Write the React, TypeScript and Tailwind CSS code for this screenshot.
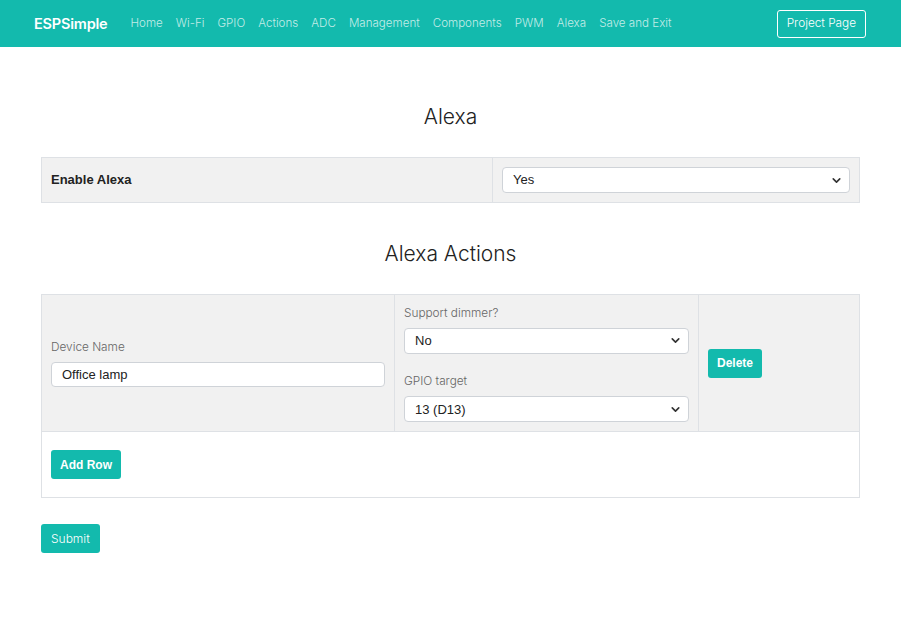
import { ChevronDown } from 'lucide-react';

const links = ['Home', 'Wi-Fi', 'GPIO', 'Actions', 'ADC', 'Management', 'Components', 'PWM', 'Alexa', 'Save and Exit'];

function Select({ value }: { value: string }) {
  return (
    <div className="flex h-[26px] items-center justify-between rounded-[4px] border border-[#cfd3d8] bg-white pl-[10px] pr-[6px] font-['Liberation_Sans',sans-serif] text-[13px] text-[#222]">
      <span>{value}</span>
      <ChevronDown className="h-[13px] w-[13px] text-[#333]" strokeWidth={3} />
    </div>
  );
}

export default function App() {
  return (
    <div className="min-h-[634px] bg-white font-['Inter',sans-serif]">
      <nav className="flex h-[47px] items-center bg-[#13baad] pl-[34px] pr-[35px] pt-[1px]">
        <span className="mr-[23px] text-[14.5px] font-semibold tracking-[-0.2px] text-white">ESPSimple</span>
        <div className="flex gap-[13px] text-[11.6px] font-light text-[#c3ece8]">
          {links.map((l) => (
            <span key={l}>{l}</span>
          ))}
        </div>
        <span className="ml-auto flex h-[28px] items-center rounded-[3px] border border-white px-[9px] text-[11.8px] font-light text-white">
          Project Page
        </span>
      </nav>

      <main className="mx-[41px] pt-[56px]">
        <h2 className="text-center text-[21px] font-light leading-[28px] text-[#222]">Alexa</h2>

        <div className="mt-[26px] flex h-[46px] border border-[#dee1e5] bg-[#f1f1f1]">
          <div className="flex w-[451px] items-center border-r border-[#dee1e5] px-[9px] font-['Liberation_Sans',sans-serif] text-[13px] font-bold text-[#222]">
            Enable Alexa
          </div>
          <div className="flex-1 px-[9px] pt-[9px]">
            <Select value="Yes" />
          </div>
        </div>

        <h2 className="mt-[37px] text-center text-[21px] font-light leading-[28px] text-[#222]">Alexa Actions</h2>

        <div className="mt-[26px] border border-[#dee1e5]">
          <div className="flex h-[137px] border-b border-[#dee1e5] bg-[#f1f1f1]">
            <div className="flex w-[353px] flex-col justify-center border-r border-[#dee1e5] px-[9px]">
              <label className="mb-[5px] text-[11.8px] font-light text-[#666]">Device Name</label>
              <div className="flex h-[25px] items-center rounded-[4px] border border-[#cfd3d8] bg-white px-[10px] font-['Liberation_Sans',sans-serif] text-[13px] text-[#222]">
                Office lamp
              </div>
            </div>
            <div className="flex w-[304px] flex-col border-r border-[#dee1e5] px-[9px] pt-[10px]">
              <label className="mb-[5px] text-[11.8px] font-light text-[#666]">Support dimmer?</label>
              <Select value="No" />
              <label className="mb-[6px] mt-[19px] text-[11.8px] font-light text-[#666]">GPIO target</label>
              <Select value="13 (D13)" />
            </div>
            <div className="flex flex-1 items-center px-[9px]">
              <button className="h-[29px] rounded-[3px] bg-[#13baad] px-[9px] font-['Liberation_Sans',sans-serif] text-[12px] font-semibold text-white">
                Delete
              </button>
            </div>
          </div>
          <div className="flex h-[65px] items-center px-[9px]">
            <button className="h-[29px] rounded-[3px] bg-[#13baad] px-[9px] font-['Liberation_Sans',sans-serif] text-[12px] font-semibold text-white">
              Add Row
            </button>
          </div>
        </div>

        <button className="mt-[26px] h-[29px] rounded-[3px] bg-[#13baad] px-[10px] text-[12px] font-light text-white">
          Submit
        </button>
      </main>
    </div>
  );
}
